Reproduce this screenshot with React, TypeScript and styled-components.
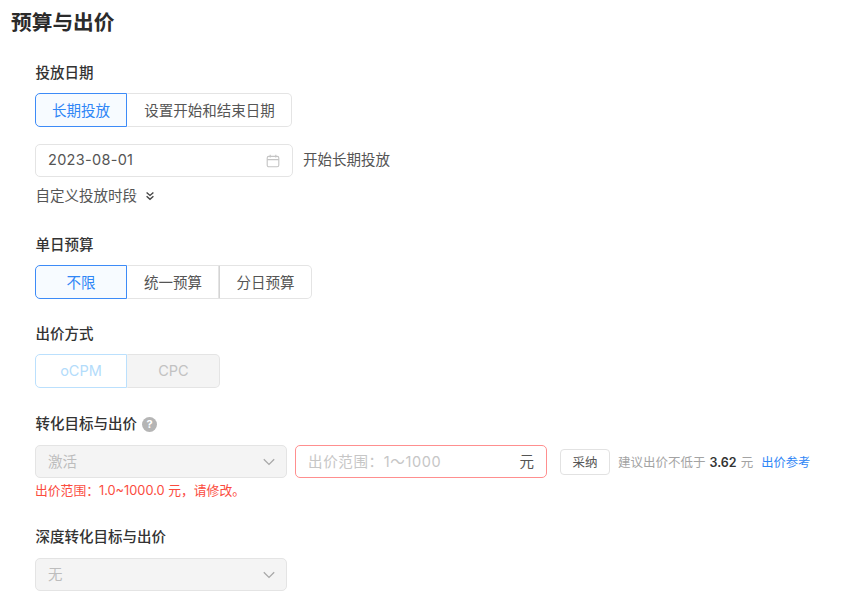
import React from 'react';
import styled, { createGlobalStyle } from 'styled-components';

const GlobalStyle = createGlobalStyle`
  html, body {
    margin: 0;
    padding: 0;
    background: #fff;
  }
  body {
    font-family: Inter, "Noto Sans CJK SC", sans-serif;
    color: #333;
  }
`;

const Calendar = () => (
  <svg width="14" height="14" viewBox="0 0 14 14" fill="none" stroke="#c4c4c4" strokeWidth="1.1">
    <rect x="1.2" y="2.4" width="11.6" height="10.4" rx="1.6" />
    <path d="M1.2 5.6h11.6M4.2 .8v2.6M9.8 .8v2.6" />
  </svg>
);

const DoubleDown = () => (
  <svg width="10" height="10" viewBox="0 0 10 10" fill="none" stroke="#444" strokeWidth="1.4">
    <path d="M1.6 1.4 5 4.4l3.4-3M1.6 5.2 5 8.2l3.4-3" />
  </svg>
);

const Chevron = () => (
  <svg width="12" height="8" viewBox="0 0 12 8" fill="none" stroke="#a8a8a8" strokeWidth="1.3">
    <path d="M.8 1.2 6 6.4l5.2-5.2" />
  </svg>
);

const App = () => (
  <Page>
    <GlobalStyle />
    <Title>预算与出价</Title>
    <Body>
      <Section $height={172}>
        <Label>投放日期</Label>
        <Segments>
          <Segment $width={92} $active>长期投放</Segment>
          <Segment $width={165}>设置开始和结束日期</Segment>
        </Segments>
        <DateRow>
          <DateInput>
            <DateValue>2023-08-01</DateValue>
            <Calendar />
          </DateInput>
          <Note>开始长期投放</Note>
        </DateRow>
        <MoreLink>
          自定义投放时段
          <DoubleDown />
        </MoreLink>
      </Section>

      <Section $height={89}>
        <Label>单日预算</Label>
        <Segments>
          <Segment $width={92} $active>不限</Segment>
          <Segment $width={92}>统一预算</Segment>
          <Segment $width={93} $divided>分日预算</Segment>
        </Segments>
      </Section>

      <Section $height={90}>
        <Label>出价方式</Label>
        <Segments>
          <Segment $width={92} $faded>oCPM</Segment>
          <Segment $width={93} $disabled>CPC</Segment>
        </Segments>
      </Section>

      <Section $height={113}>
        <Label $gap={11}>
          转化目标与出价
          <HelpMark>?</HelpMark>
        </Label>
        <BidRow>
          <Select>
            <SelectText>激活</SelectText>
            <Chevron />
          </Select>
          <BidInput>
            <Placeholder>出价范围：1～1000</Placeholder>
            <Unit>元</Unit>
          </BidInput>
          <AcceptButton>采纳</AcceptButton>
          <Hint>
            建议出价不低于<Strong>3.62</Strong>元
          </Hint>
          <HintLink>出价参考</HintLink>
        </BidRow>
        <ErrorText>出价范围：1.0~1000.0 元，请修改。</ErrorText>
      </Section>

      <Section $height={66}>
        <Label $gap={11}>深度转化目标与出价</Label>
        <Select>
          <SelectText>无</SelectText>
          <Chevron />
        </Select>
      </Section>
    </Body>
  </Page>
);

export default App;

const Page = styled.div`
  width: 845px;
  height: 603px;
  overflow: hidden;
`;

const Title = styled.h1`
  margin: 0;
  padding: 8px 0 0 11px;
  height: 30px;
  font-size: 20.7px;
  line-height: 30px;
  font-weight: 700;
  color: #2b2b2b;
`;

const Body = styled.div`
  padding: 25px 0 0 35px;
`;

const Section = styled.section<{ $height: number }>`
  height: ${(p) => p.$height}px;
`;

const Label = styled.div<{ $gap?: number }>`
  display: flex;
  align-items: center;
  gap: 5px;
  height: 20px;
  margin-bottom: ${(p) => p.$gap ?? 10}px;
  padding-left: 0.5px;
  font-size: 14.5px;
  line-height: 20px;
  font-weight: 500;
  color: #333;
`;

const HelpMark = styled.span`
  width: 15px;
  height: 15px;
  border-radius: 50%;
  background: #b5b5b5;
  color: #fff;
  font-size: 11px;
  line-height: 15px;
  font-weight: 700;
  text-align: center;
`;

const Segments = styled.div`
  display: flex;
  height: 34px;
`;

const Segment = styled.div<{ $width: number; $active?: boolean; $faded?: boolean; $disabled?: boolean; $divided?: boolean }>`
  box-sizing: border-box;
  width: ${(p) => p.$width}px;
  padding-bottom: 2px;
  display: flex;
  align-items: center;
  justify-content: center;
  font-size: 14.5px;
  border: 1px solid #e4e4e4;
  border-left-color: transparent;
  border-radius: 0 5px 5px 0;
  color: #555;
  background: #fff;

  &:not(:last-child) {
    border-radius: 0;
  }

  ${(p) => p.$divided && 'border-left-color: #d4d4d4;'}

  ${(p) =>
    p.$active &&
    `
    border: 1px solid #3d8bf7;
    border-radius: 5px 0 0 5px !important;
    background: #f7fbff;
    color: #2f86f6;
  `}

  ${(p) =>
    p.$faded &&
    `
    border: 1px solid #bbe0fd;
    border-radius: 5px 0 0 5px !important;
    color: #b3dcfb;
  `}

  ${(p) =>
    p.$disabled &&
    `
    background: #f4f4f4;
    color: #c2c2c2;
  `}
`;

const DateRow = styled.div`
  display: flex;
  align-items: center;
  gap: 10px;
  margin-top: 17px;
`;

const DateInput = styled.div`
  box-sizing: border-box;
  width: 258px;
  height: 33px;
  padding: 0 12px;
  display: flex;
  align-items: center;
  justify-content: space-between;
  border: 1px solid #e4e4e4;
  border-radius: 5px;
`;

const DateValue = styled.span`
  margin-top: -2px;
  font-size: 14.5px;
  letter-spacing: 0.3px;
  color: #555;
`;

const Note = styled.span`
  margin-top: -5px;
  font-size: 14.5px;
  color: #555;
`;

const MoreLink = styled.div`
  display: flex;
  align-items: center;
  gap: 8px;
  margin-top: 9px;
  padding-left: 0.5px;
  font-size: 14.5px;
  line-height: 20px;
  color: #555;
`;

const BidRow = styled.div`
  display: flex;
  align-items: center;
  height: 33px;
`;

const Select = styled.div`
  box-sizing: border-box;
  width: 252px;
  height: 33px;
  padding: 0 11px 0 12px;
  display: flex;
  align-items: center;
  justify-content: space-between;
  border: 1px solid #e4e4e4;
  border-radius: 5px;
  background: #f4f4f4;
  font-size: 14.5px;
  color: #bdbdbd;
`;

const SelectText = styled.span`
  margin-top: -2px;
`;

const BidInput = styled.div`
  box-sizing: border-box;
  width: 252px;
  height: 33px;
  margin-left: 8px;
  padding: 0 12px 2px;
  display: flex;
  align-items: center;
  justify-content: space-between;
  border: 1px solid #ff8f8f;
  border-radius: 5px;
  font-size: 14.5px;
`;

const Placeholder = styled.span`
  letter-spacing: 0.65px;
  color: #c6c6c6;
`;

const Unit = styled.span`
  color: #555;
`;

const AcceptButton = styled.button`
  box-sizing: border-box;
  width: 50px;
  height: 26px;
  margin-left: 13px;
  padding: 0;
  border: 1px solid #e2e2e2;
  border-radius: 4px;
  background: #fff;
  font-family: inherit;
  font-size: 12.5px;
  color: #555;
`;

const Hint = styled.span`
  margin-left: 8px;
  font-size: 12.5px;
  color: #a3a3a3;
`;

const Strong = styled.b`
  margin: 0 4px;
  font-weight: 600;
  color: #333;
`;

const HintLink = styled.a`
  margin-left: 8px;
  font-size: 12.3px;
  color: #2f86f6;
`;

const ErrorText = styled.div`
  margin-top: 4px;
  font-size: 12.8px;
  line-height: 18px;
  color: #fb4b3e;
`;
